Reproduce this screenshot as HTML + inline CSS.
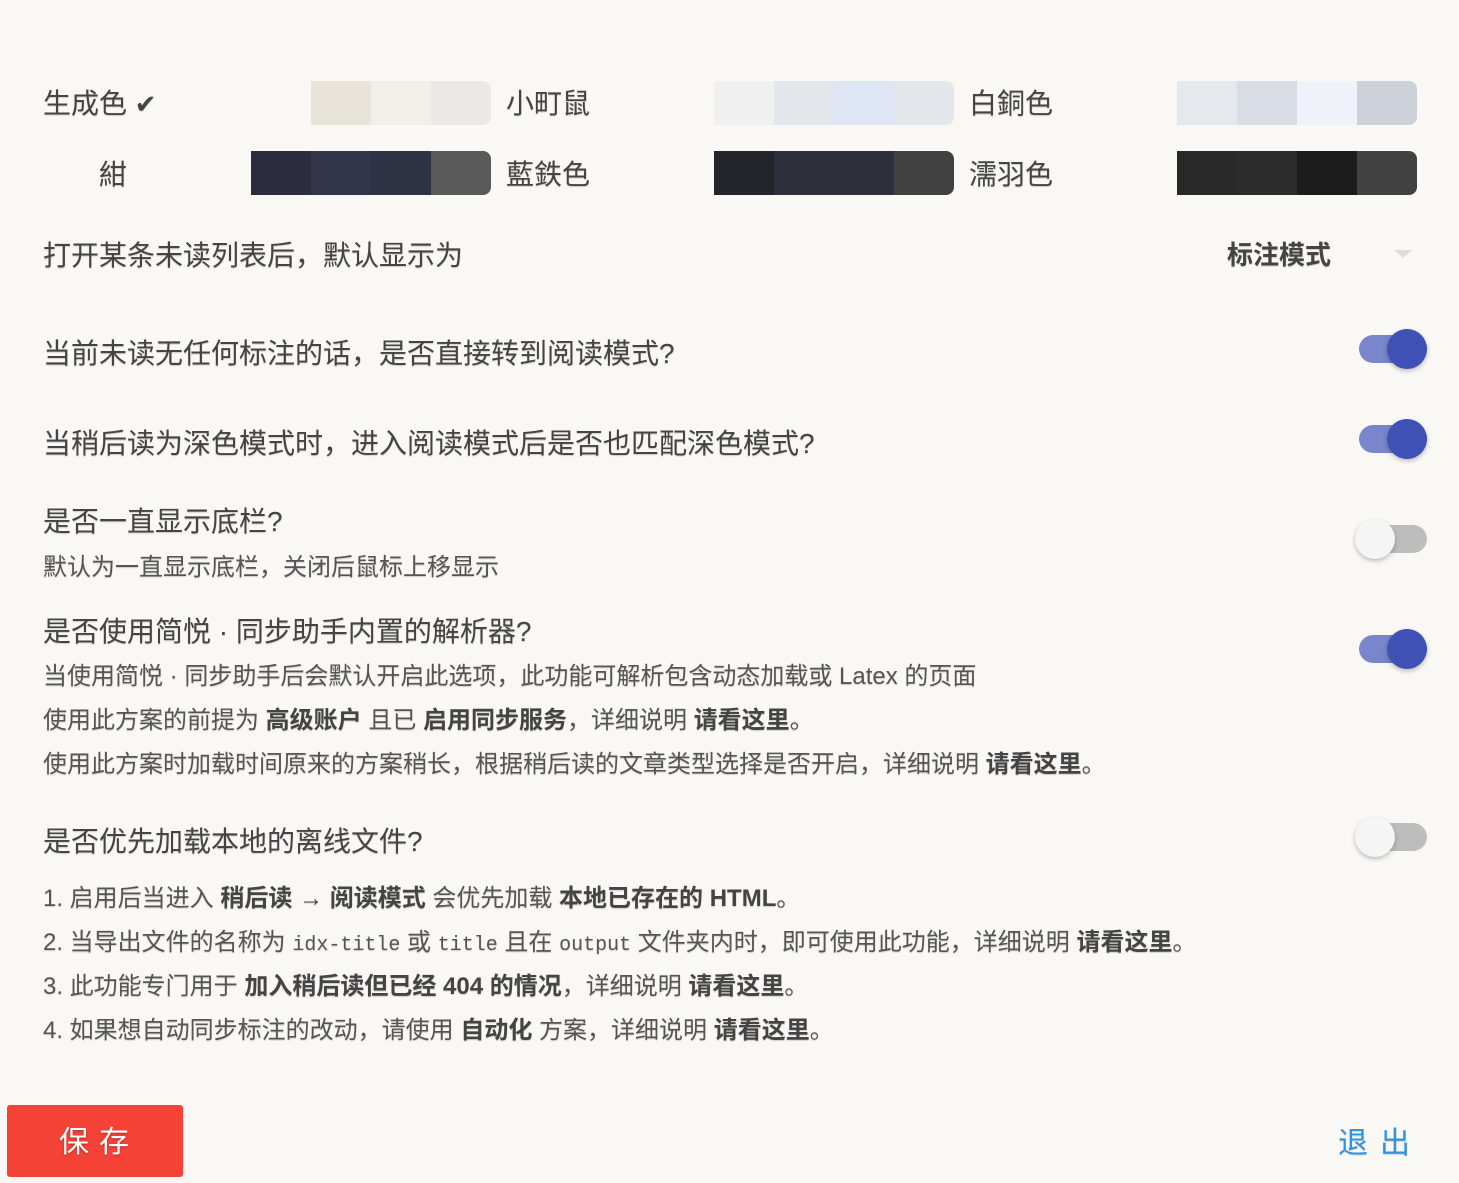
<!DOCTYPE html>
<html><head><meta charset="utf-8"><style>
html,body{margin:0;padding:0;}
body{width:1459px;height:1183px;background:#f9f8f5;position:relative;overflow:hidden;font-family:"Liberation Sans","Noto Sans CJK SC",sans-serif;color:#444;text-shadow:0 1px 1px rgba(0,0,0,.18);}
.a{position:absolute;white-space:nowrap;line-height:1;}
.t{font-size:28px;}
.s{font-size:24px;color:#555;}
b{font-weight:bold;color:#444;}
.sw{position:absolute;display:flex;height:44px;border-radius:0 8px 8px 0;overflow:hidden;}
.sw i{display:block;width:60px;height:44px;}
.tg{position:absolute;left:1359px;width:68px;height:28px;border-radius:14px;}
.tg.on{background:linear-gradient(90deg,#7a87cc,#7682c8);}
.tg.off{background:#bdbdbd;}
.tg span{position:absolute;top:-6px;width:40px;height:40px;border-radius:50%;box-shadow:0 2px 5px rgba(0,0,0,.25);}
.tg.on span{left:28px;background:#3f51b5;}
.tg.off span{left:-4px;background:#f5f5f5;}
.m{font-family:"Liberation Mono",monospace;font-size:20px;}
</style></head><body>

<div class="a t" style="left:43px;top:90px;">生成色 <span style="font-size:26px">✔</span></div>
<div class="sw" style="left:311px;top:81px;width:180px"><i style="background:#e8e4d9"></i><i style="background:#f0efea"></i><i style="background:#eae9e5"></i></div>
<div class="a t" style="left:506px;top:90px;">小町鼠</div>
<div class="sw" style="left:714px;top:81px;width:240px"><i style="background:#f0f0f0"></i><i style="background:#e3e6ea"></i><i style="background:#dee6f6"></i><i style="background:#e3e6ea"></i></div>
<div class="a t" style="left:969px;top:90px;">白銅色</div>
<div class="sw" style="left:1177px;top:81px;width:240px"><i style="background:#e5e8ed"></i><i style="background:#d8dce4"></i><i style="background:#eff2f9"></i><i style="background:#cdd1d9"></i></div>

<div class="a t" style="left:99px;top:161px;">紺</div>
<div class="sw" style="left:251px;top:151px;width:240px"><i style="background:#2b2c3e"></i><i style="background:#33354b"></i><i style="background:#2f3245"></i><i style="background:#595959"></i></div>
<div class="a t" style="left:506px;top:161px;">藍鉄色</div>
<div class="sw" style="left:714px;top:151px;width:240px"><i style="background:#24252b"></i><i style="background:#2d2f3a"></i><i style="background:#2d2f3a"></i><i style="background:#414141"></i></div>
<div class="a t" style="left:969px;top:161px;">濡羽色</div>
<div class="sw" style="left:1177px;top:151px;width:240px"><i style="background:#282828"></i><i style="background:#2c2c2c"></i><i style="background:#1c1c1c"></i><i style="background:#414141"></i></div>

<div class="a t" style="left:43px;top:242px;">打开某条未读列表后，默认显示为</div>
<div class="a t" style="left:1227px;top:242px;font-weight:bold;font-size:26px;">标注模式</div>
<div class="a" style="left:1394px;top:250px;width:0;height:0;border-left:9px solid transparent;border-right:9px solid transparent;border-top:8px solid #ddd;"></div>

<div class="a t" style="left:43px;top:340px;">当前未读无任何标注的话，是否直接转到阅读模式?</div>
<div class="tg on" style="top:335px"><span></span></div>

<div class="a t" style="left:43px;top:430px;">当稍后读为深色模式时，进入阅读模式后是否也匹配深色模式?</div>
<div class="tg on" style="top:425px"><span></span></div>

<div class="a t" style="left:43px;top:508px;">是否一直显示底栏?</div>
<div class="a s" style="left:43px;top:556px;">默认为一直显示底栏，关闭后鼠标上移显示</div>
<div class="tg off" style="top:525px"><span></span></div>

<div class="a t" style="left:43px;top:618px;">是否使用简悦 · 同步助手内置的解析器?</div>
<div class="tg on" style="top:635px"><span></span></div>
<div class="a s" style="left:43px;top:665px;">当使用简悦 · 同步助手后会默认开启此选项，此功能可解析包含动态加载或 Latex 的页面</div>
<div class="a s" style="left:43px;top:709px;">使用此方案的前提为 <b>高级账户</b> 且已 <b>启用同步服务</b>，详细说明 <b>请看这里</b>。</div>
<div class="a s" style="left:43px;top:753px;">使用此方案时加载时间原来的方案稍长，根据稍后读的文章类型选择是否开启，详细说明 <b>请看这里</b>。</div>

<div class="a t" style="left:43px;top:828px;">是否优先加载本地的离线文件?</div>
<div class="tg off" style="top:823px"><span></span></div>

<div class="a s" style="left:43px;top:887px;">1. 启用后当进入 <b>稍后读 → 阅读模式</b> 会优先加载 <b>本地已存在的 HTML</b>。</div>
<div class="a s" style="left:43px;top:931px;">2. 当导出文件的名称为 <span class="m">idx-title</span> 或 <span class="m">title</span> 且在 <span class="m">output</span> 文件夹内时，即可使用此功能，详细说明 <b>请看这里</b>。</div>
<div class="a s" style="left:43px;top:975px;">3. 此功能专门用于 <b>加入稍后读但已经 404 的情况</b>，详细说明 <b>请看这里</b>。</div>
<div class="a s" style="left:43px;top:1019px;">4. 如果想自动同步标注的改动，请使用 <b>自动化</b> 方案，详细说明 <b>请看这里</b>。</div>

<div class="a" style="left:7px;top:1105px;width:176px;height:72px;background:#f44336;border-radius:3px;color:#fff;font-size:30px;line-height:76px;text-align:center;text-indent:8px;letter-spacing:10px;text-shadow:0 1px 2px rgba(0,0,0,.3);">保存</div>
<div class="a" style="left:1338px;top:1129px;font-size:30px;color:#2e94dd;letter-spacing:12px;">退出</div>

</body></html>
